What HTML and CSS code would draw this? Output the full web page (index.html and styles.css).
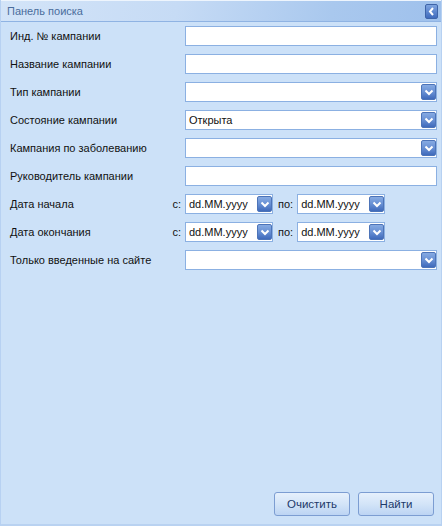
FILE: index.html
```html
<!DOCTYPE html>
<html lang="ru">
<head>
<meta charset="utf-8">
<title>Панель поиска</title>
<link rel="stylesheet" href="styles.css">
</head>
<body>
<div class="panel">
  <div class="header">
    <span class="title">Панель поиска</span>
    <span class="collapse"><svg width="7" height="9" viewBox="0 0 7 9"><path d="M5 1 L2 4.5 L5 8" fill="none" stroke="#fff" stroke-width="2"/></svg></span>
  </div>
  <div class="body">
    <div class="row"><div class="label">Инд. № кампании</div><div class="field"></div></div>
    <div class="row"><div class="label">Название кампании</div><div class="field"></div></div>
    <div class="row"><div class="label">Тип кампании</div><div class="field select"><span class="val"></span><span class="btn"><svg width="10" height="7" viewBox="0 0 10 7"><path d="M1.5 1.5 L5 5 L8.5 1.5" fill="none" stroke="#fff" stroke-width="2"/></svg></span></div></div>
    <div class="row"><div class="label">Состояние кампании</div><div class="field select"><span class="val">Открыта</span><span class="btn"><svg width="10" height="7" viewBox="0 0 10 7"><path d="M1.5 1.5 L5 5 L8.5 1.5" fill="none" stroke="#fff" stroke-width="2"/></svg></span></div></div>
    <div class="row"><div class="label">Кампания по заболеванию</div><div class="field select"><span class="val"></span><span class="btn"><svg width="10" height="7" viewBox="0 0 10 7"><path d="M1.5 1.5 L5 5 L8.5 1.5" fill="none" stroke="#fff" stroke-width="2"/></svg></span></div></div>
    <div class="row"><div class="label">Руководитель кампании</div><div class="field"></div></div>
    <div class="row">
      <div class="label split"><span>Дата начала</span><span>с:</span></div>
      <div class="field date select"><span class="val">dd.MM.yyyy</span><span class="btn"><svg width="10" height="7" viewBox="0 0 10 7"><path d="M1.5 1.5 L5 5 L8.5 1.5" fill="none" stroke="#fff" stroke-width="2"/></svg></span></div>
      <span class="to">по:</span>
      <div class="field date select"><span class="val">dd.MM.yyyy</span><span class="btn"><svg width="10" height="7" viewBox="0 0 10 7"><path d="M1.5 1.5 L5 5 L8.5 1.5" fill="none" stroke="#fff" stroke-width="2"/></svg></span></div>
    </div>
    <div class="row">
      <div class="label split"><span>Дата окончания</span><span>с:</span></div>
      <div class="field date select"><span class="val">dd.MM.yyyy</span><span class="btn"><svg width="10" height="7" viewBox="0 0 10 7"><path d="M1.5 1.5 L5 5 L8.5 1.5" fill="none" stroke="#fff" stroke-width="2"/></svg></span></div>
      <span class="to">по:</span>
      <div class="field date select"><span class="val">dd.MM.yyyy</span><span class="btn"><svg width="10" height="7" viewBox="0 0 10 7"><path d="M1.5 1.5 L5 5 L8.5 1.5" fill="none" stroke="#fff" stroke-width="2"/></svg></span></div>
    </div>
    <div class="row"><div class="label">Только введенные на сайте</div><div class="field select"><span class="val"></span><span class="btn"><svg width="10" height="7" viewBox="0 0 10 7"><path d="M1.5 1.5 L5 5 L8.5 1.5" fill="none" stroke="#fff" stroke-width="2"/></svg></span></div></div>
  </div>
  <div class="footer">
    <button class="button">Очистить</button>
    <button class="button">Найти</button>
  </div>
</div>
</body>
</html>
```
FILE: styles.css
```css
* { box-sizing: border-box; }
html, body { margin: 0; padding: 0; }
body {
  width: 442px;
  height: 526px;
  font-family: "Liberation Sans", Arial, sans-serif;
  font-size: 11px;
  color: #111;
  background: #cde2f8;
}
.panel {
  width: 442px;
  height: 526px;
  display: flex;
  flex-direction: column;
  background: #cce1f8;
  border-left: 1px solid #b7d1f2;
  border-right: 1px solid #b7d1f2;
  border-bottom: 2px solid #b9d2f1;
}
.header {
  height: 22px;
  flex: none;
  display: flex;
  align-items: center;
  justify-content: space-between;
  padding: 0 3px 0 6px;
  border-top: 1px solid #eef5fd;
  border-bottom: 1px solid #8fb3e3;
  background: linear-gradient(100deg, #d3e4f8 0%, #c6dbf5 40%, #a9c8ee 75%, #9fc1ec 100%);
}
.title {
  color: #4a6d9c;
  font-size: 11px;
}
.collapse {
  width: 13px;
  height: 15px;
  border-radius: 2px;
  border: 1px solid #3e64a8;
  background: linear-gradient(#7ea4e0, #3f6bbd);
  display: flex;
  align-items: center;
  justify-content: center;
}
.body {
  flex: 1;
  display: flex;
  flex-direction: column;
  gap: 8px;
  padding: 4px 4px 0 8px;
}
.row {
  display: flex;
  align-items: center;
  height: 20px;
}
.label {
  width: 176px;
  flex: none;
  padding-left: 1px;
}
.label.split {
  display: flex;
  justify-content: space-between;
  padding-right: 4px;
}
.field {
  width: 252px;
  height: 20px;
  background: #fff;
  border: 1px solid #8bb0e2;
  display: flex;
  align-items: center;
  justify-content: space-between;
  padding-left: 3px;
}
.field.date {
  width: 88px;
}
.val {
  color: #111;
}
.btn {
  width: 15px;
  height: 16px;
  border-radius: 2px;
  border: 1px solid #4d74b8;
  background: linear-gradient(#86aae2 0%, #6890d4 50%, #3f6abb 100%);
  display: flex;
  align-items: center;
  justify-content: center;
}
.to {
  margin: 0 4px 0 5px;
}
.footer {
  flex: none;
  display: flex;
  justify-content: flex-end;
  gap: 8px;
  padding: 0 7px 8px 0;
}
.button {
  width: 76px;
  height: 24px;
  font-family: "Liberation Sans", Arial, sans-serif;
  font-size: 11.5px;
  color: #1d3a6b;
  border: 1px solid #7c9dd2;
  border-radius: 3px;
  background: linear-gradient(#e6f0fc 0%, #d3e4f8 50%, #bcd4f3 100%);
  padding: 0;
}
```
